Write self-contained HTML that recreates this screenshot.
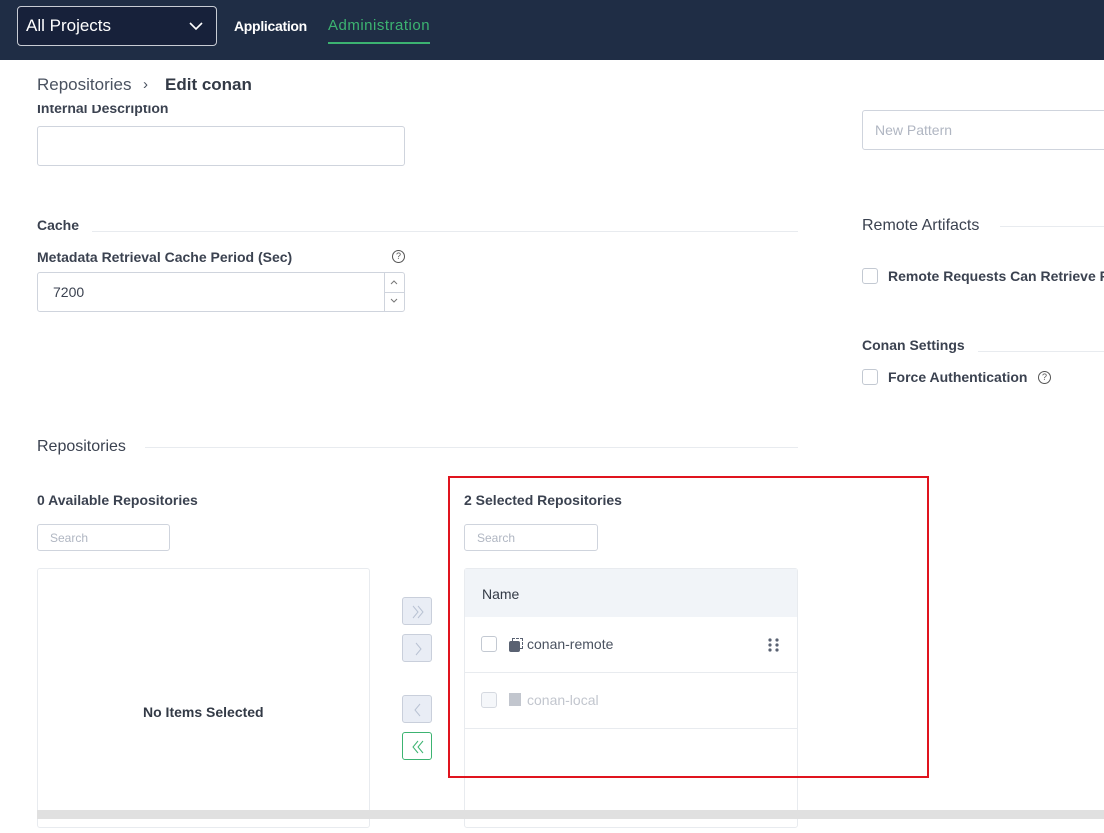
<!DOCTYPE html>
<html><head><style>
*{box-sizing:border-box}
body{margin:0;width:1104px;height:833px;overflow:hidden;background:#fff;font-family:"Liberation Sans",sans-serif;color:#3b4250;position:relative}
.a{position:absolute}
.hdr{left:0;top:0;width:1104px;height:60px;background:#1f2d45}
.inp{border:1px solid #cfd4dd;border-radius:3px;background:#fff}
.lbl{font-size:14px;font-weight:bold;color:#3b4250}
.sec{font-size:16px;color:#3b4250}
.line{height:1px;background:#e8ebef}
.cb{width:16px;height:16px;border:1px solid #c3c9d2;border-radius:3px;background:#fff}
.btn{width:30px;height:28px;border:1px solid #c9cfdb;border-radius:3px;background:#e9edf5}
.btn svg{position:absolute;left:0;top:0}
.q{width:13px;height:13px;border:1px solid #555;border-radius:50%;font-size:9px;text-align:center;line-height:11px;color:#555}
</style></head><body>
<div class="a hdr"></div>
<div class="a" style="left:17px;top:6px;width:200px;height:40px;border:1px solid #c8ccd4;border-radius:4px;background:#17213a"></div>
<div class="a" style="left:26px;top:16px;color:#fff;font-size:17px">All Projects</div>
<svg class="a" style="left:188px;top:20px" width="16" height="12"><path d="M2 3l6 6 6-6" stroke="#fff" stroke-width="1.6" fill="none"/></svg>
<div class="a" style="left:234px;top:18px;color:#fff;font-size:14px;font-weight:bold;letter-spacing:-0.3px">Application</div>
<div class="a" style="left:328px;top:17px;color:#3cb371;font-size:15px;letter-spacing:0.5px">Administration</div>
<div class="a" style="left:328px;top:42px;width:102px;height:2px;background:#3cb371"></div>

<div class="a" style="left:37px;top:75px;font-size:17px;color:#4a5260">Repositories</div>
<div class="a" style="left:143px;top:76px;font-size:15px;color:#4a5260">›</div>
<div class="a" style="left:165px;top:75px;font-size:17px;font-weight:bold;color:#333a46">Edit conan</div>
<div class="a" style="left:37px;top:105px;width:200px;height:13px;overflow:hidden"><div style="margin-top:-5px" class="lbl">Internal Description</div></div>
<div class="a inp" style="left:37px;top:126px;width:368px;height:40px"></div>

<div class="a inp" style="left:862px;top:110px;width:260px;height:40px"></div>
<div class="a" style="left:875px;top:122px;font-size:14px;color:#b0b6c2">New Pattern</div>

<div class="a lbl" style="left:37px;top:217px">Cache</div>
<div class="a line" style="left:92px;top:231px;width:706px"></div>
<div class="a lbl" style="left:37px;top:249px">Metadata Retrieval Cache Period (Sec)</div>
<div class="a q" style="left:392px;top:250px">?</div>
<div class="a inp" style="left:37px;top:272px;width:368px;height:40px"></div>
<div class="a" style="left:53px;top:284px;font-size:14px">7200</div>
<div class="a" style="left:384px;top:273px;width:1px;height:38px;background:#cfd4dd"></div>
<div class="a" style="left:385px;top:292px;width:19px;height:1px;background:#cfd4dd"></div>
<svg class="a" style="left:389px;top:278px" width="10" height="30"><path d="M2 6l3-3 3 3M2 21l3 3 3-3" stroke="#777" fill="none"/></svg>

<div class="a sec" style="left:862px;top:217px">Remote Artifacts</div>
<div class="a line" style="left:1000px;top:226px;width:104px"></div>
<div class="a cb" style="left:862px;top:268px"></div>
<div class="a lbl" style="left:888px;top:268px;white-space:nowrap">Remote Requests Can Retrieve Remote</div>
<div class="a lbl" style="left:862px;top:337px">Conan Settings</div>
<div class="a line" style="left:978px;top:351px;width:126px"></div>
<div class="a cb" style="left:862px;top:369px"></div>
<div class="a lbl" style="left:888px;top:369px">Force Authentication</div>
<div class="a q" style="left:1038px;top:371px">?</div>

<div class="a sec" style="left:37px;top:438px">Repositories</div>
<div class="a line" style="left:145px;top:447px;width:653px"></div>

<div class="a lbl" style="left:37px;top:492px">0 Available Repositories</div>
<div class="a inp" style="left:37px;top:524px;width:133px;height:27px"></div>
<div class="a" style="left:50px;top:531px;font-size:12px;color:#b0b6c2">Search</div>
<div class="a" style="left:37px;top:568px;width:333px;height:260px;border:1px solid #e8ebef;border-radius:3px"></div>
<div class="a lbl" style="left:143px;top:704px;color:#333a46">No Items Selected</div>

<div class="a btn" style="left:402px;top:597px"><svg width="30" height="28"><path d="M10 8l5 6-5 6M15 8l5 6-5 6" stroke="#b9c2d3" fill="none"/></svg></div>
<div class="a btn" style="left:402px;top:634px"><svg width="30" height="28"><path d="M13 8l5 6-5 6" stroke="#b9c2d3" fill="none"/></svg></div>
<div class="a btn" style="left:402px;top:695px"><svg width="30" height="28"><path d="M17 8l-5 6 5 6" stroke="#b9c2d3" fill="none"/></svg></div>
<div class="a btn" style="left:402px;top:732px;background:#fff;border-color:#3cb371"><svg width="30" height="28"><path d="M15 8l-5 6 5 6M20 8l-5 6 5 6" stroke="#3cb371" fill="none"/></svg></div>

<div class="a lbl" style="left:464px;top:492px">2 Selected Repositories</div>
<div class="a inp" style="left:464px;top:524px;width:134px;height:27px"></div>
<div class="a" style="left:477px;top:531px;font-size:12px;color:#b0b6c2">Search</div>
<div class="a" style="left:464px;top:568px;width:334px;height:260px;border:1px solid #e8ebef;border-radius:3px"></div>
<div class="a" style="left:465px;top:569px;width:332px;height:48px;background:#f1f4f8"></div>
<div class="a" style="left:482px;top:586px;font-size:14px;color:#333a46">Name</div>
<div class="a line" style="left:465px;top:672px;width:332px"></div>
<div class="a line" style="left:465px;top:728px;width:332px"></div>
<div class="a cb" style="left:481px;top:636px"></div>
<div class="a" style="left:512px;top:638px;width:11px;height:11px;border:1px dashed #5a6272"></div>
<div class="a" style="left:509px;top:641px;width:11px;height:11px;background:#5a6272;border-radius:2px"></div>
<div class="a" style="left:527px;top:636px;font-size:14px;color:#4a5260">conan-remote</div>
<svg class="a" style="left:767px;top:638px" width="14" height="14"><g fill="#5a6272"><circle cx="3" cy="2" r="1.6"/><circle cx="10" cy="2" r="1.6"/><circle cx="3" cy="7" r="1.6"/><circle cx="10" cy="7" r="1.6"/><circle cx="3" cy="12" r="1.6"/><circle cx="10" cy="12" r="1.6"/></g></svg>
<div class="a cb" style="left:481px;top:692px;background:#f5f7fa;border-color:#d5d9e0"></div>
<div class="a" style="left:509px;top:693px;width:12px;height:13px;background:#c2c6ce"></div>
<div class="a" style="left:527px;top:692px;font-size:14px;color:#c2c6ce">conan-local</div>

<div class="a" style="left:448px;top:476px;width:481px;height:302px;border:2px solid #e0141e"></div>
<div class="a" style="left:37px;top:810px;width:1067px;height:9px;background:#e0e0e0"></div>
</body></html>
